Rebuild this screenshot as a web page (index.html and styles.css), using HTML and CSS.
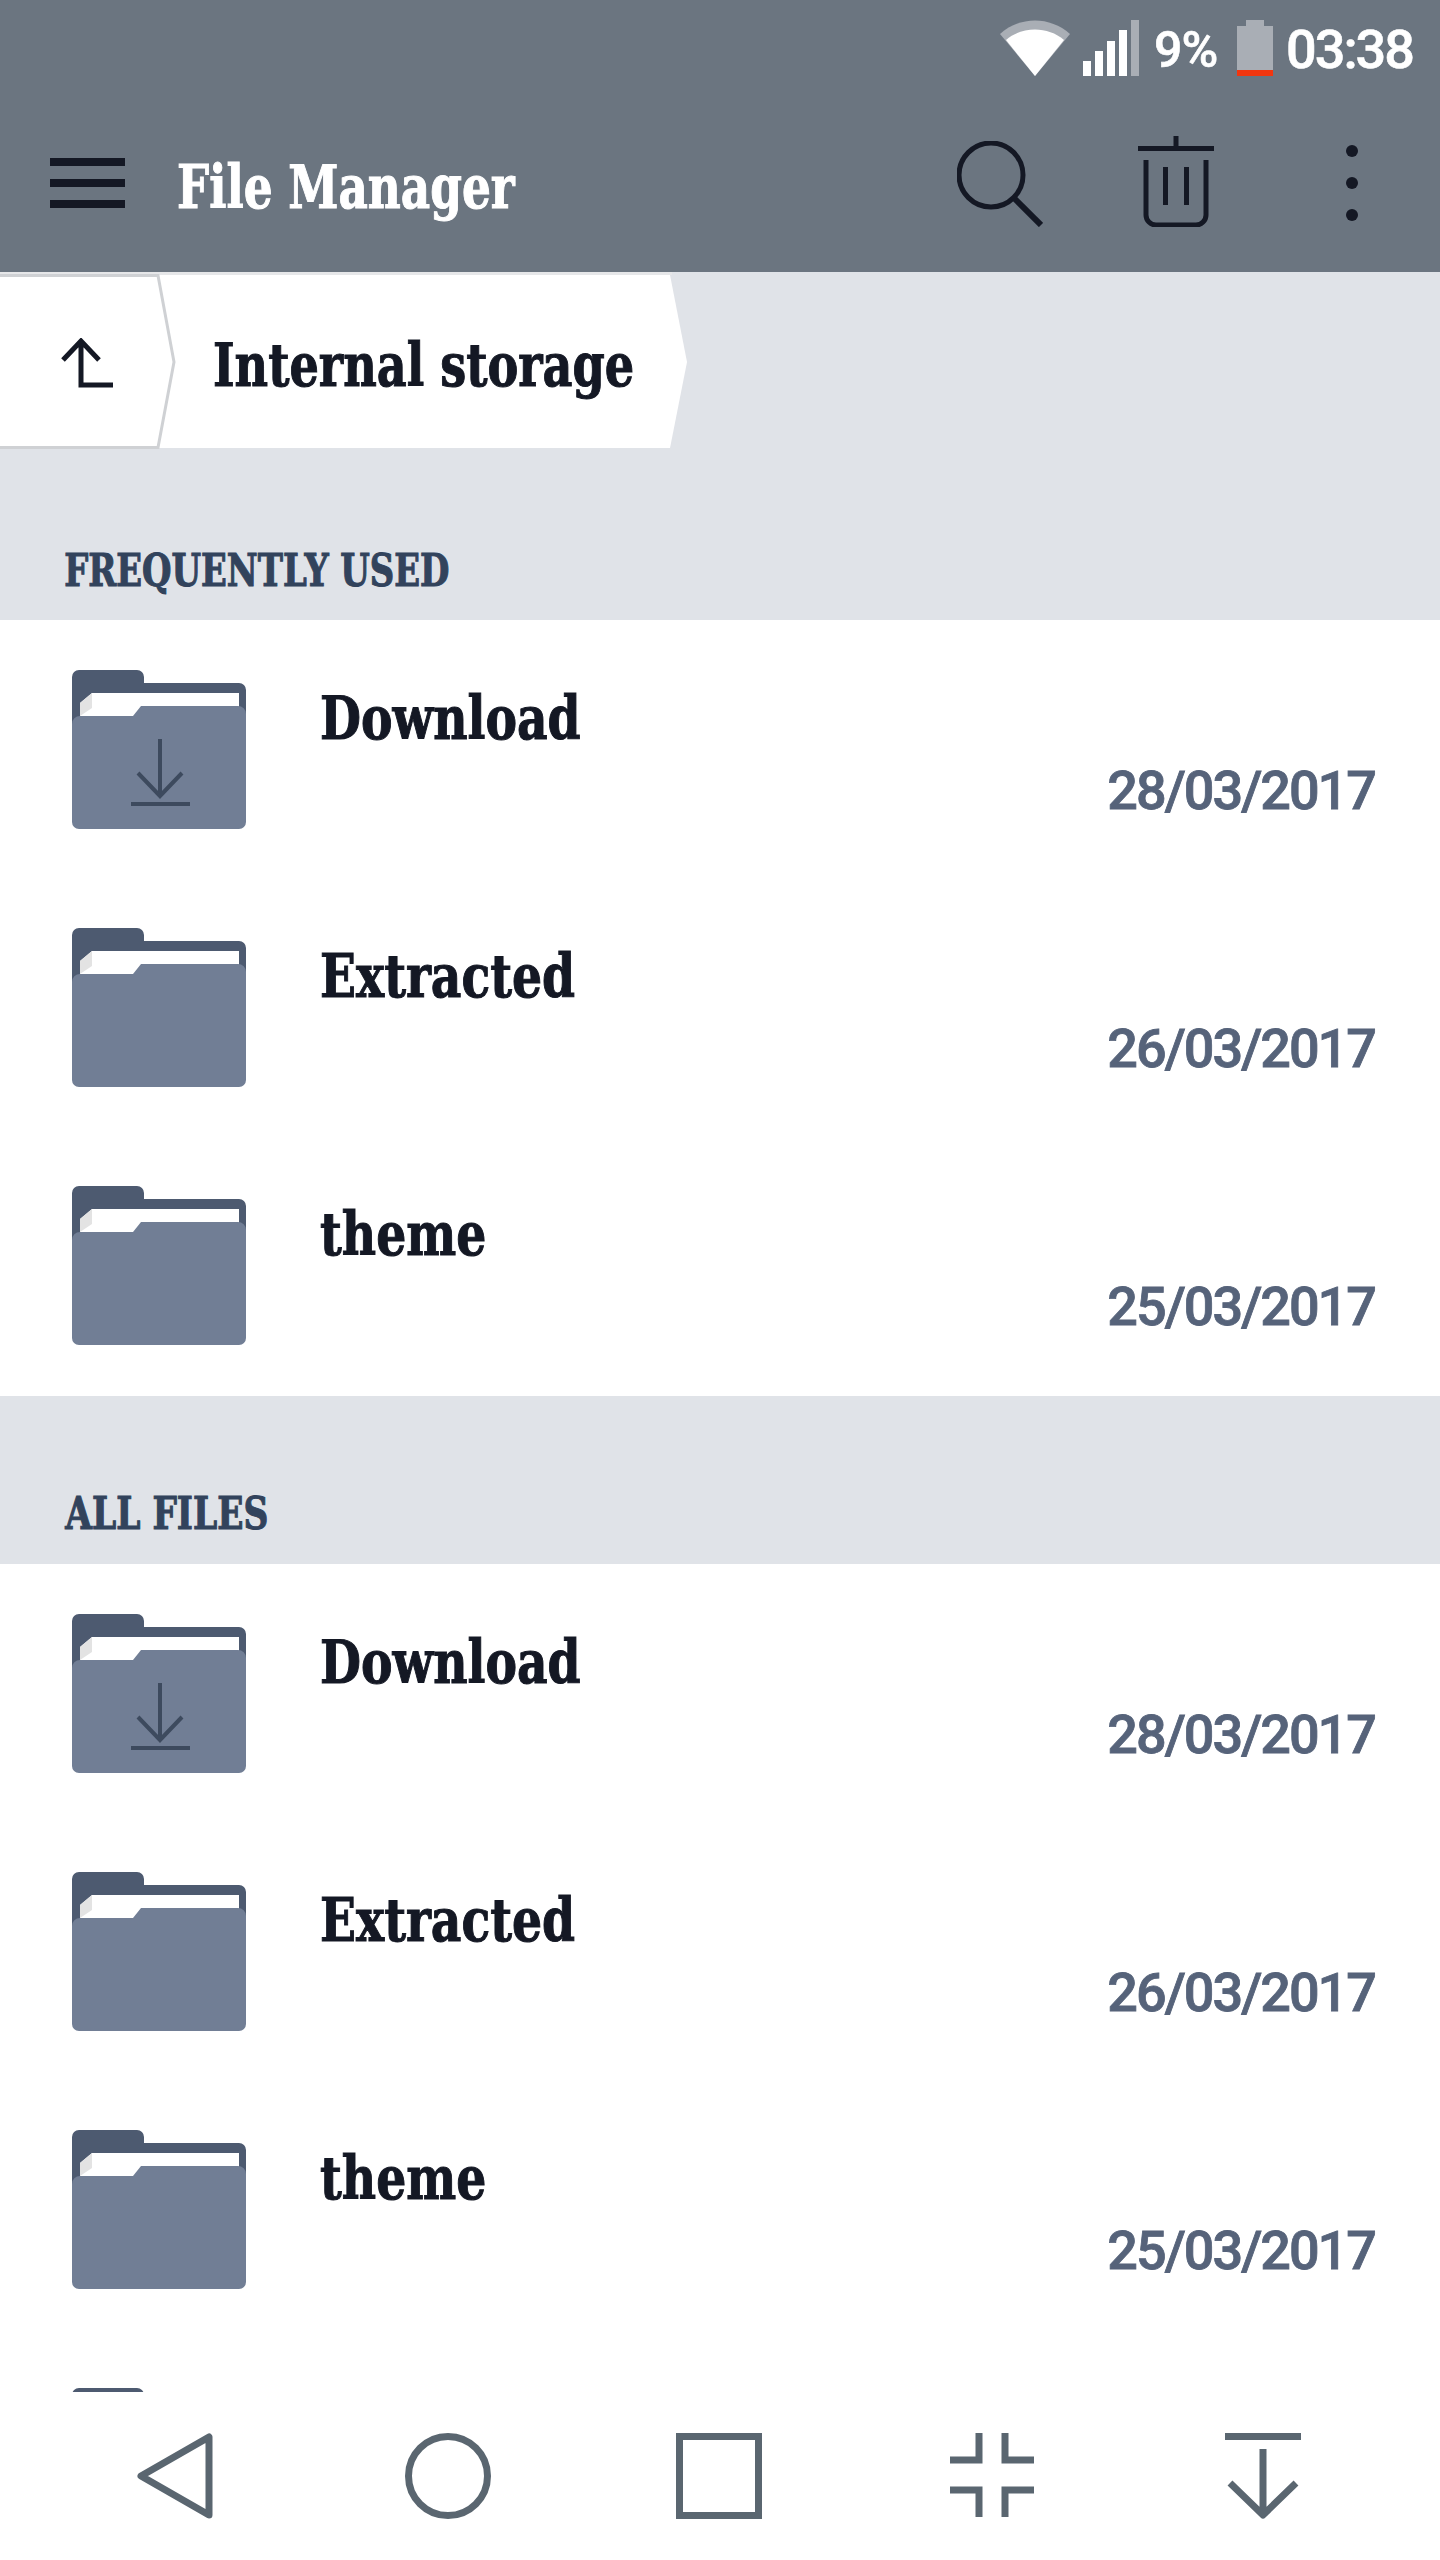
FILE: index.html
```html
<!DOCTYPE html>
<html lang="en">
<head>
  <meta charset="UTF-8">
  <meta name="viewport" content="width=device-width, initial-scale=1.0">
  <title>File Manager</title>
  <link rel="stylesheet" href="styles.css">
</head>
<body>
  <svg class="defs" width="0" height="0">
    <symbol id="folder" viewBox="0 0 174 159">
      <path d="M0 150V7a7 7 0 0 1 7-7h58a7 7 0 0 1 7 7v6h95a7 7 0 0 1 7 7v130z" fill="#4d5a70"/>
      <path d="M8 38V33L20 23H167V50H8z" fill="#fff"/>
      <path d="M8 46V33L20 23V38z" fill="#e3e3e3"/>
      <path d="M0 54a8 8 0 0 1 8-8H61L69 36H166a8 8 0 0 1 8 8V152a7 7 0 0 1-7 7H7a7 7 0 0 1-7-7z" fill="#717e95"/>
    </symbol>
    <symbol id="folder-dl" viewBox="0 0 174 159">
      <use href="#folder"/>
      <path d="M88 69V125M66 103L88 126L110 103M59 134H118" fill="none" stroke="#3d4a5e" stroke-width="4"/>
    </symbol>
  </svg>

  <header class="topbar">
    <div class="status">
      <svg class="ico-wifi" width="70" height="56" viewBox="0 0 70 56">
        <path d="M0 14C20 -4 50 -4 70 14L35 56z" fill="#a9aeb5"/>
        <path d="M6 20C22 6 48 6 64 20L35 56z" fill="#fff"/>
      </svg>
      <svg class="ico-signal" width="56" height="56" viewBox="0 0 56 56">
        <path d="M0 41h8v15h-8zM12 31h8v25h-8zM24 21h8v35h-8zM36 10h8v46h-8z" fill="#fff"/>
        <path d="M48 0h8v56h-8z" fill="#a9aeb5"/>
      </svg>
      <span class="pct">9%</span>
      <svg class="ico-batt" width="36" height="56" viewBox="0 0 36 56">
        <path d="M9 0h18v6h9v44H0V6h9z" fill="#a9aeb5"/>
        <path d="M0 50h36v6H0z" fill="#f2360f"/>
      </svg>
      <span class="clock">03:38</span>
    </div>
    <div class="toolbar">
      <svg class="ico-menu" width="75" height="50" viewBox="0 0 75 50">
        <path d="M0 0h75v8H0zM0 21h75v8H0zM0 42h75v8H0z" fill="#141824"/>
      </svg>
      <h1 class="title slab">File Manager</h1>
      <svg class="ico-search" width="86" height="86" viewBox="0 0 86 86">
        <circle cx="34" cy="34" r="32" fill="none" stroke="#141824" stroke-width="5"/>
        <path d="M57 57L84 84" stroke="#141824" stroke-width="6" fill="none"/>
      </svg>
      <svg class="ico-trash" width="76" height="91" viewBox="0 0 76 91">
        <path d="M0 12.500H76M38 0V12M8 24V79a10 10 0 0 0 10 10H58a10 10 0 0 0 10-10V24M27.500 31V69M48.500 31V69" fill="none" stroke="#141824" stroke-width="5"/>
      </svg>
      <svg class="ico-more" width="12" height="76" viewBox="0 0 12 76">
        <circle cx="6" cy="6" r="6" fill="#141824"/>
        <circle cx="6" cy="38" r="6" fill="#141824"/>
        <circle cx="6" cy="70" r="6" fill="#141824"/>
      </svg>
    </div>
  </header>

  <main class="content">
    <nav class="crumbs">
      <svg class="crumb-bg" width="690" height="180" viewBox="0 0 690 180">
        <path d="M0 0H672V3H0z" fill="#e6e7e9"/>
        <path d="M0 3H670L687 90L670 176H0z" fill="#fff"/>
        <path d="M0 3.500H158L174 90L158 175.500H0" fill="#fff" stroke="#cfd1d4" stroke-width="3"/>
      </svg>
      <svg class="crumb-up" width="54" height="50" viewBox="0 0 54 50">
        <path d="M2 22L20 3L38 22M20 3V47H52" fill="none" stroke="#141824" stroke-width="5"/>
      </svg>
      <span class="crumb-name slab">Internal storage</span>
    </nav>

    <h2 class="section-label section-first slab">FREQUENTLY USED</h2>
    <ul class="list list-first">
      <li class="row">
        <svg class="folder"><use href="#folder-dl"/></svg>
        <span class="name slab">Download</span>
        <span class="date">28/03/2017</span>
      </li>
      <li class="row">
        <svg class="folder"><use href="#folder"/></svg>
        <span class="name slab">Extracted</span>
        <span class="date">26/03/2017</span>
      </li>
      <li class="row">
        <svg class="folder"><use href="#folder"/></svg>
        <span class="name slab">theme</span>
        <span class="date">25/03/2017</span>
      </li>
    </ul>

    <h2 class="section-label section-next slab">ALL FILES</h2>
    <ul class="list">
      <li class="row">
        <svg class="folder"><use href="#folder-dl"/></svg>
        <span class="name slab">Download</span>
        <span class="date">28/03/2017</span>
      </li>
      <li class="row">
        <svg class="folder"><use href="#folder"/></svg>
        <span class="name slab">Extracted</span>
        <span class="date">26/03/2017</span>
      </li>
      <li class="row">
        <svg class="folder"><use href="#folder"/></svg>
        <span class="name slab">theme</span>
        <span class="date">25/03/2017</span>
      </li>
      <li class="row">
        <svg class="folder"><use href="#folder"/></svg>
      </li>
    </ul>
  </main>

  <footer class="navbar">
    <svg width="76" height="86" viewBox="0 0 76 86" class="nav-back">
      <path d="M72 4V82L4 43z" fill="none" stroke="#5a6670" stroke-width="7" stroke-linejoin="round"/>
    </svg>
    <svg width="86" height="86" viewBox="0 0 86 86" class="nav-home">
      <circle cx="43" cy="43" r="39.500" fill="none" stroke="#5a6670" stroke-width="7"/>
    </svg>
    <svg width="86" height="86" viewBox="0 0 86 86" class="nav-recent">
      <rect x="3.500" y="3.500" width="79" height="79" fill="none" stroke="#5a6670" stroke-width="7"/>
    </svg>
    <svg width="84" height="84" viewBox="0 0 84 84" class="nav-split">
      <path d="M29 0V27H0M55 0V27H84M29 84V57H0M55 84V57H84" fill="none" stroke="#5a6670" stroke-width="7"/>
    </svg>
    <svg width="76" height="86" viewBox="0 0 76 86" class="nav-down">
      <path d="M0 3.500H76M38 16V80M5 50L38 82L71 50" fill="none" stroke="#5a6670" stroke-width="7" stroke-linejoin="round"/>
    </svg>
  </footer>
</body>
</html>
```

FILE: styles.css
```css
html, body { margin: 0; padding: 0; }
body { width: 1440px; height: 2560px; display: flex; flex-direction: column; overflow: hidden; background: #e0e3e8; color: #141824; font-family: "DejaVu Serif Condensed", "DejaVu Serif", "Liberation Serif", serif; }
.defs { position: absolute; }
svg { display: block; flex: none; }

/* slab titles: no narrow slab font here, so squeeze the condensed serif and thicken it */
.slab { font-weight: 700; transform-origin: left center; white-space: nowrap; -webkit-text-stroke: 1px currentColor; }

.topbar { height: 272px; background: #6b7580; flex: none; }
.status { height: 96px; padding: 20px 26px 0 0; box-sizing: border-box; display: flex; align-items: flex-start; justify-content: flex-end; }
.ico-signal { margin-left: 13px; }
.pct, .clock { font-family: Roboto, sans-serif; font-weight: 500; color: #fff; font-size: 54px; line-height: 60px; -webkit-text-stroke: .6px currentColor; }
.pct { margin-left: 15px; font-size: 50px; letter-spacing: -1px; width: 66px; }
.ico-batt { margin-left: 17px; }
.clock { margin-left: 13px; letter-spacing: -2px; width: 128px; }
.toolbar { height: 176px; display: flex; align-items: flex-start; position: relative; }
.ico-menu { margin: 62px 0 0 50px; }
.title { margin: 56px 0 0 52px; font-size: 60px; line-height: 70px; color: #fff; width: 401px; transform: scaleX(.84); }
.ico-search { margin: 45px 0 0 379px; }
.ico-trash { margin: 40px 0 0 95px; }
.ico-more { margin: 49px 0 0 132px; }

.content { flex: 1; overflow: hidden; min-height: 0; }
.crumbs { height: 176px; display: flex; align-items: flex-start; position: relative; }
.crumb-bg { position: absolute; left: 0; top: 0; }
.crumb-up { position: relative; margin: 66px 0 0 61px; }
.crumb-name { position: relative; margin: 59px 0 0 98px; font-size: 60px; line-height: 68px; transform: scaleX(.855); }

.section-label { margin: 0; color: #32435c; font-size: 44px; line-height: 52px; }
.section-first { padding: 97px 0 0 75px; height: 75px; transform: scaleX(.855); }
.section-next { padding: 92px 0 0 75px; height: 76px; transform: scaleX(.87); }

.list { list-style: none; margin: 0; padding: 0; background: #fff; }
.list-first { padding-bottom: 2px; }
.row { height: 258px; display: flex; align-items: flex-start; }
.folder { width: 174px; height: 159px; margin: 50px 0 0 72px; }
.name { margin: 63px 0 0 74px; font-size: 60px; line-height: 70px; transform: scaleX(.875); }
.date { margin: 143px 65px 0 auto; font-family: Roboto, sans-serif; font-weight: 500; font-size: 54px; line-height: 56px; letter-spacing: -2px; color: #56637a; -webkit-text-stroke: .8px currentColor; }

.navbar { height: 168px; background: #fff; flex: none; position: relative; }
.navbar svg { position: absolute; top: 41px; }
.nav-back { left: 137px; }
.nav-home { left: 405px; }
.nav-recent { left: 676px; }
.nav-split { left: 950px; }
.nav-down { left: 1225px; }
```
